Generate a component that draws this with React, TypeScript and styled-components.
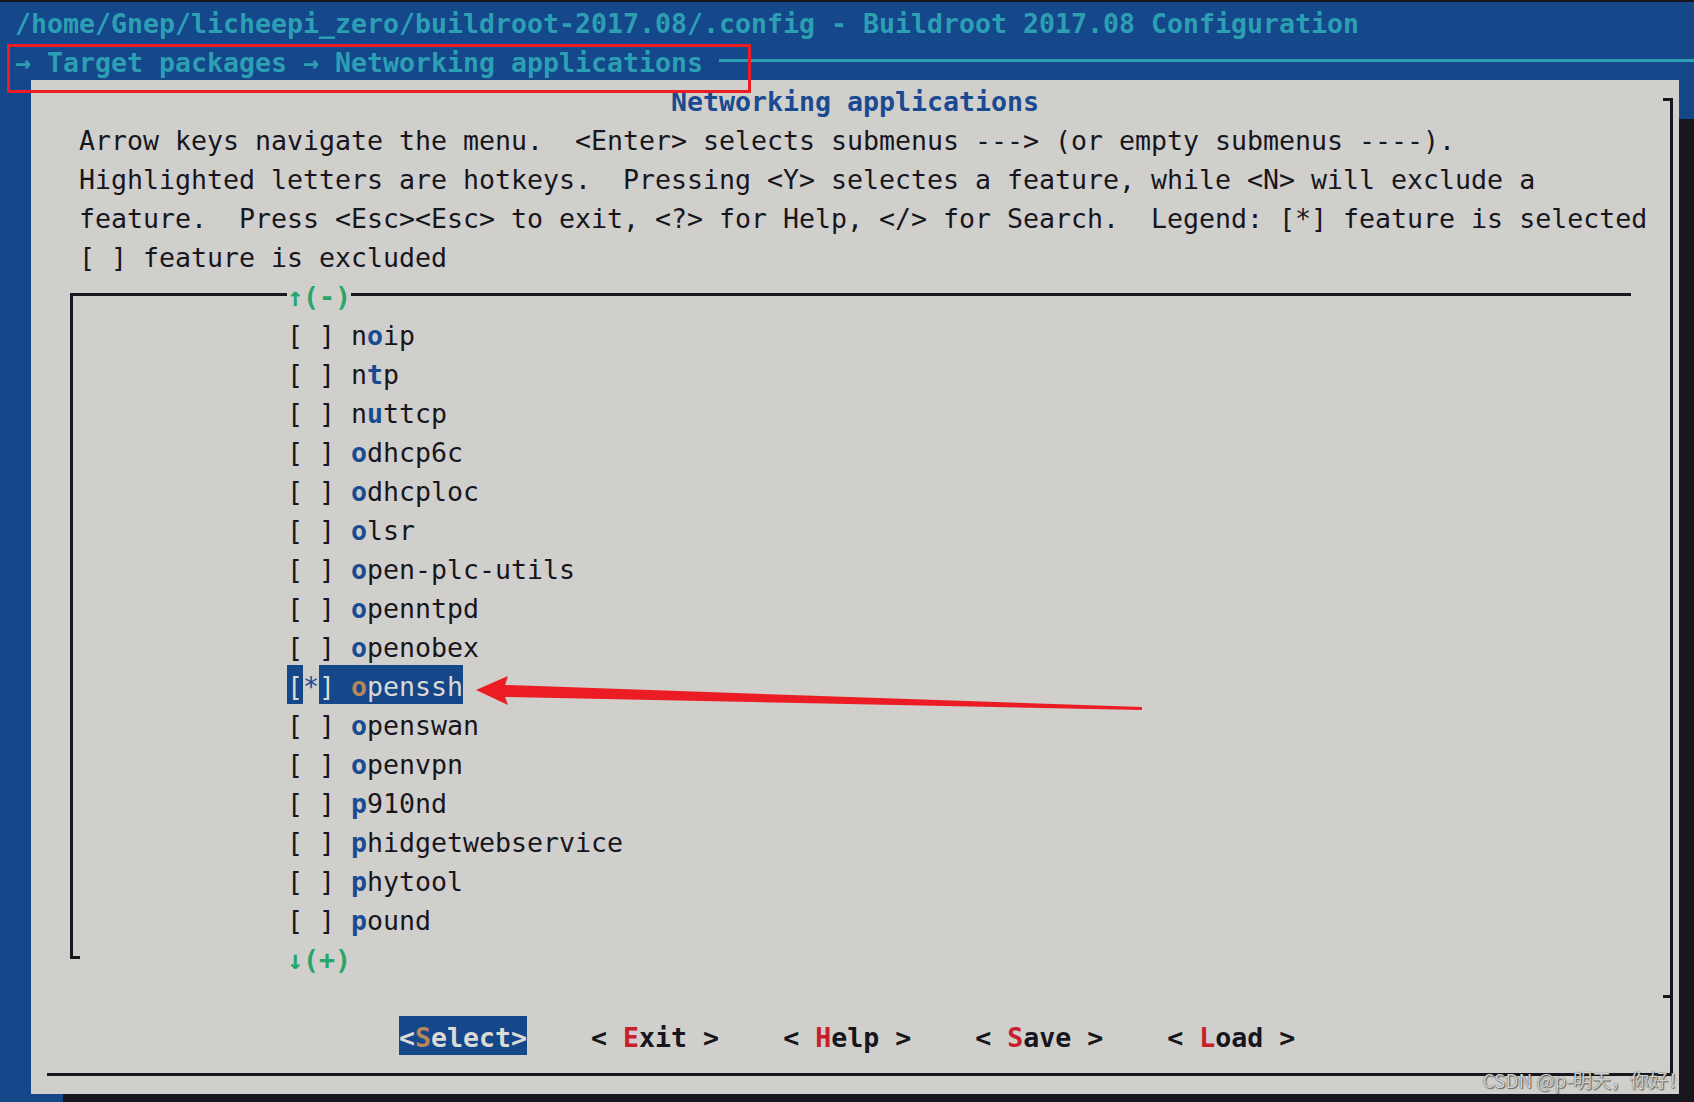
import React from "react";
import styled, { createGlobalStyle } from "styled-components";

const C = {
  blue: "#15478b",
  teal: "#2c9fb3",
  dark: "#17161f",
  gray: "#d0cfcb",
  navy: "#1a4b91",
  red: "#c8202b",
  light: "#dcdad4",
  brown: "#b6875a",
  green: "#27a56b",
  mark: "#ec1c24",
};

const Global = createGlobalStyle`
  html, body { margin: 0; padding: 0; background: ${C.dark}; }
  body { width: 1694px; height: 1102px; overflow: hidden; }
`;

const Screen = styled.div`
  position: relative;
  width: 1694px;
  height: 1102px;
  box-sizing: border-box;
  border-top: 2px solid ${C.dark};
  background: ${C.blue};
  overflow: hidden;
  font-family: "DejaVu Sans Mono", "Liberation Mono", monospace;
  font-size: 26.58px;
  line-height: 43px;
  white-space: pre;
`;

const BackTitle = styled.div`
  height: 39px;
  padding-left: 15px;
  color: ${C.teal};
  font-weight: bold;
`;

const Breadcrumb = styled.div`
  height: 39px;
  padding-left: 15px;
  display: flex;
  align-items: flex-start;
  color: ${C.teal};
  font-weight: bold;
`;

const HLine = styled.div`
  flex: 1;
  height: 3px;
  margin-top: 18px;
  margin-left: 16px;
  background: ${C.teal};
`;

const Dialog = styled.div`
  position: relative;
  margin-left: 31px;
  width: 1648px;
  height: 1014px;
  background: ${C.gray};
  box-shadow: 32px 39px 0 ${C.dark};
  color: ${C.dark};
`;

const DialogFrame = styled.div`
  position: absolute;
  left: 16px;
  top: 18px;
  right: 6px;
  bottom: 18px;
  border-right: 3px solid ${C.dark};
  border-bottom: 3px solid ${C.dark};
  pointer-events: none;
  &::before {
    content: "";
    position: absolute;
    top: 0;
    right: -3px;
    width: 10px;
    height: 3px;
    background: ${C.dark};
  }
  &::after {
    content: "";
    position: absolute;
    top: 897px;
    right: 0;
    width: 7px;
    height: 3px;
    background: ${C.dark};
  }
`;

const Row = styled.div<{ $indent?: number }>`
  height: 39px;
  padding-left: ${(p) => p.$indent ?? 0}px;
`;

const DialogTitle = styled.div`
  height: 39px;
  text-align: center;
  color: ${C.navy};
  font-weight: bold;
`;

const MenuSection = styled.div`
  position: relative;
  &::before {
    content: "";
    position: absolute;
    top: 18px;
    left: 39px;
    width: 1561px;
    height: 666px;
    box-sizing: border-box;
    border-top: 3px solid ${C.dark};
    border-left: 3px solid ${C.dark};
  }
  &::after {
    content: "";
    position: absolute;
    top: 681px;
    left: 39px;
    width: 10px;
    height: 3px;
    background: ${C.dark};
  }
`;

const ScrollMark = styled.span`
  position: relative;
  background: ${C.gray};
  color: ${C.green};
  font-weight: bold;
`;

const Hot = styled.span`
  color: ${C.navy};
  font-weight: bold;
`;

const Hl = styled.span`
  display: inline-block;
  height: 39px;
  background: ${C.blue};
  color: ${C.light};
`;

const Star = styled.span`
  display: inline-block;
  height: 39px;
  color: ${C.navy};
`;

const SelHot = styled.span`
  color: ${C.brown};
  font-weight: bold;
`;

const ButtonBar = styled.div`
  height: 39px;
  padding-left: 368px;
  display: flex;
  align-items: flex-start;
  gap: 64px;
  font-weight: bold;
`;

const Button = styled.span<{ $active?: boolean }>`
  display: inline-block;
  height: 39px;
  background: ${(p) => (p.$active ? C.blue : "transparent")};
  color: ${(p) => (p.$active ? C.light : C.dark)};
`;

const BtnKey = styled.span<{ $active?: boolean }>`
  color: ${(p) => (p.$active ? C.brown : C.red)};
`;

const RedBox = styled.div`
  position: absolute;
  left: 7px;
  top: 42px;
  width: 744px;
  height: 49px;
  box-sizing: border-box;
  border: 3px solid ${C.mark};
  pointer-events: none;
`;

const ArrowSvg = styled.svg`
  position: absolute;
  left: 470px;
  top: 663px;
  pointer-events: none;
`;

const Watermark = styled.div`
  position: absolute;
  right: 7px;
  bottom: 10px;
  font-family: "Noto Sans CJK SC", "Noto Sans", sans-serif;
  font-size: 19px;
  line-height: 24px;
  color: rgba(236, 236, 236, 0.85);
  text-shadow: 0 0 1px rgba(40, 40, 40, 0.9), 1px 1px 1px rgba(40, 40, 40, 0.6);
  white-space: pre;
`;

const helpLines = [
  "Arrow keys navigate the menu.  <Enter> selects submenus ---> (or empty submenus ----).",
  "Highlighted letters are hotkeys.  Pressing <Y> selectes a feature, while <N> will exclude a",
  "feature.  Press <Esc><Esc> to exit, <?> for Help, </> for Search.  Legend: [*] feature is selected",
  "[ ] feature is excluded",
];

const items: { name: string; k: number; sel?: boolean }[] = [
  { name: "noip", k: 1 },
  { name: "ntp", k: 1 },
  { name: "nuttcp", k: 1 },
  { name: "odhcp6c", k: 0 },
  { name: "odhcploc", k: 0 },
  { name: "olsr", k: 0 },
  { name: "open-plc-utils", k: 0 },
  { name: "openntpd", k: 0 },
  { name: "openobex", k: 0 },
  { name: "openssh", k: 0, sel: true },
  { name: "openswan", k: 0 },
  { name: "openvpn", k: 0 },
  { name: "p910nd", k: 0 },
  { name: "phidgetwebservice", k: 0 },
  { name: "phytool", k: 0 },
  { name: "pound", k: 0 },
];

const buttons = [
  { pre: "<", key: "S", rest: "elect", post: ">", active: true },
  { pre: "< ", key: "E", rest: "xit", post: " >" },
  { pre: "< ", key: "H", rest: "elp", post: " >" },
  { pre: "< ", key: "S", rest: "ave", post: " >" },
  { pre: "< ", key: "L", rest: "oad", post: " >" },
];

function MenuItem({ name, k, sel }: { name: string; k: number; sel?: boolean }) {
  const before = name.slice(0, k);
  const key = name[k];
  const after = name.slice(k + 1);
  if (sel) {
    return (
      <Row $indent={256}>
        <Hl>[</Hl>
        <Star>*</Star>
        <Hl>
          {"] "}
          {before}
          <SelHot>{key}</SelHot>
          {after}
        </Hl>
      </Row>
    );
  }
  return (
    <Row $indent={256}>
      {"[ ] "}
      {before}
      <Hot>{key}</Hot>
      {after}
    </Row>
  );
}

export default function App() {
  return (
    <>
      <Global />
      <Screen>
        <BackTitle>/home/Gnep/licheepi_zero/buildroot-2017.08/.config - Buildroot 2017.08 Configuration</BackTitle>
        <Breadcrumb>
          <span>→ Target packages → Networking applications</span>
          <HLine />
        </Breadcrumb>
        <Dialog>
          <DialogFrame />
          <DialogTitle>Networking applications</DialogTitle>
          {helpLines.map((l, i) => (
            <Row key={i} $indent={48}>
              {l}
            </Row>
          ))}
          <MenuSection>
            <Row $indent={256}>
              <ScrollMark>↑(-)</ScrollMark>
            </Row>
            {items.map((it) => (
              <MenuItem key={it.name} {...it} />
            ))}
            <Row $indent={256}>
              <ScrollMark>↓(+)</ScrollMark>
            </Row>
          </MenuSection>
          <Row />
          <ButtonBar>
            {buttons.map((b, i) => (
              <Button key={i} $active={b.active}>
                {b.pre}
                <BtnKey $active={b.active}>{b.key}</BtnKey>
                {b.rest}
                {b.post}
              </Button>
            ))}
          </ButtonBar>
        </Dialog>
        <RedBox />
        <ArrowSvg width="680" height="50" viewBox="0 0 680 50">
          <polygon
            points="6,25 38,11 35,20 672,42 672,45 35,32 38,40"
            fill="#ec1c24"
          />
        </ArrowSvg>
        <Watermark>CSDN @p-明天，你好！</Watermark>
      </Screen>
    </>
  );
}
